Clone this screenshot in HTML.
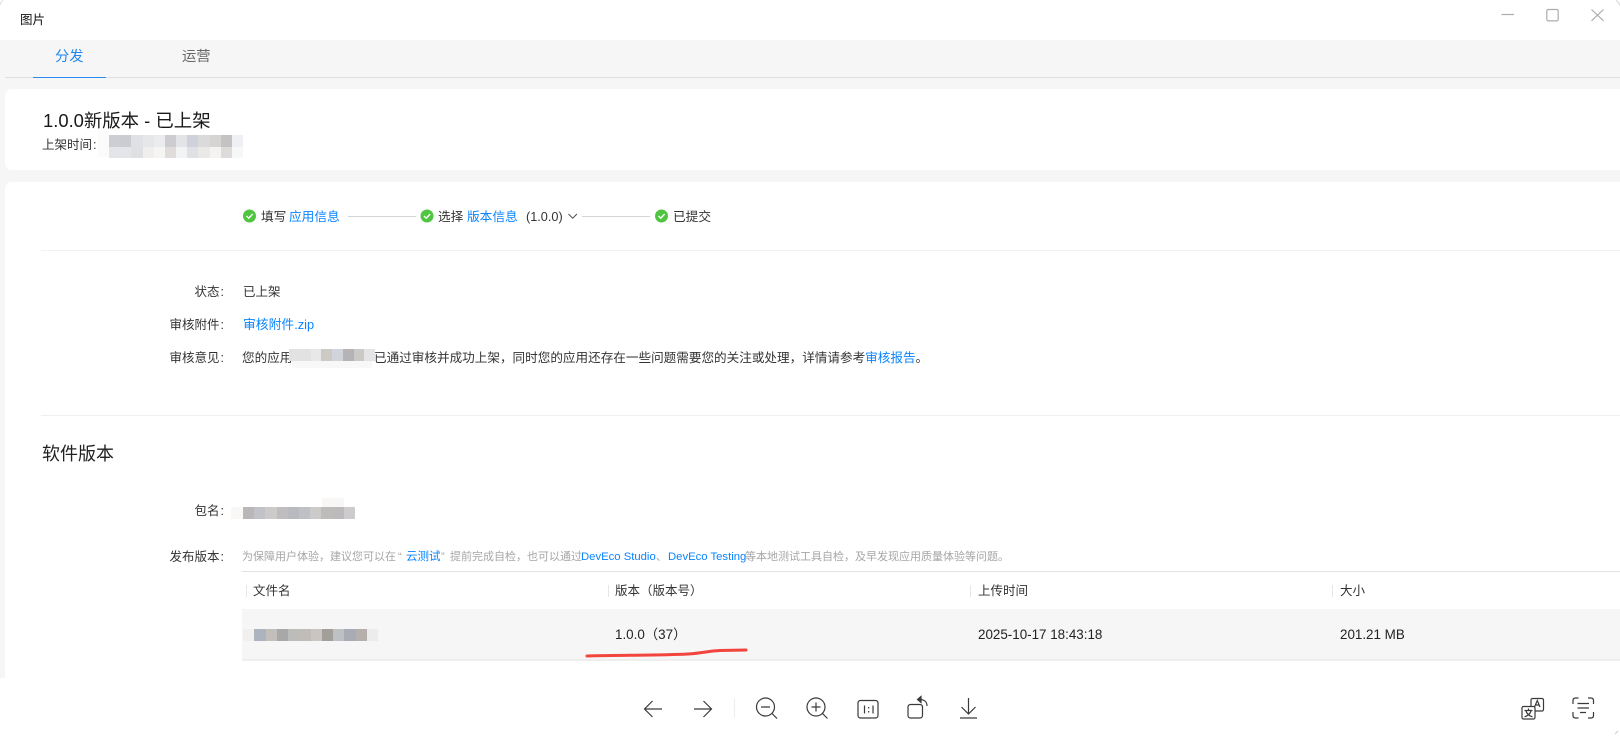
<!DOCTYPE html>
<html lang="zh"><head><meta charset="utf-8"><title>图片</title>
<style>
html,body{margin:0;padding:0;background:#fff}
#p{position:relative;width:1620px;height:736px;overflow:hidden;background:#fff;font-family:"Liberation Sans","Noto Sans CJK SC",sans-serif;font-size:12.5px;color:#333}
#p div{position:absolute;white-space:nowrap}
.t{line-height:18px;height:18px}
.st{top:208px;font-size:12.7px}
.b{color:#0a84ff}
.l{width:70px;left:154px;text-align:right}
.l span{margin-left:1px}
.h{top:548px;font-size:11px;color:#a6a6a6}
.d{font-size:11.3px;color:#0a84ff}
.s{width:1px;height:12px;top:585px;background:#e6e6e6}
.c{top:582px;font-size:12.5px;color:#333}
.v{top:626px;font-size:13.4px;color:#222}
.r{display:flex}
.r i{display:block;flex:1}
svg{position:absolute;overflow:visible}
</style></head><body><div id="p">
<div class="t" style="left:20px;top:11px;color:#111">图片</div>
<svg style="left:0;top:0" width="1620" height="40" fill="none" stroke="#a9acb1" stroke-width="1.2"><path d="M1501.5 14.5H1514"/><rect x="1546.8" y="9.5" width="11.4" height="11.4" rx="1.5"/><path d="M1591.5 9.5L1603.5 20.8M1603.5 9.5L1591.5 20.8"/><path d="M1616 0.5C1618 1.5 1619.5 3.5 1620 6" stroke="#d8d8d8" stroke-width="1"/><path d="M0 5C0.5 3 1.5 1.5 3 0.5" stroke="#d8d8d8" stroke-width="1"/></svg>

<div style="left:0;top:40px;width:1620px;height:638px;background:#f6f6f6"></div>
<div style="left:5px;top:77px;width:1615px;height:1px;background:#dedfe1"></div>
<div style="left:33px;top:77px;width:73px;height:1px;background:#2a8cf0"></div>
<div class="t" style="left:55px;top:48px;font-size:14.3px;color:#1f87f0">分发</div>
<div class="t" style="left:182px;top:48px;font-size:14.3px;color:#666">运营</div>

<div style="left:5px;top:89px;width:1615px;height:81px;background:#fff;border-radius:7px 0 0 7px"></div>
<div class="t" style="left:43px;top:112px;font-size:18.4px;color:#191919">1.0.0新版本 - 已上架</div>
<div class="t" style="left:42px;top:136px">上架时间<span style="margin-left:1px">:</span></div>
<div style="left:98px;top:130px;width:11px;height:27px;background:#fbfbfb"></div>
<div class="r" style="left:109px;top:135px;width:134px;height:12px"><i style="background:#cdced3"></i><i style="background:#cbccd1"></i><i style="background:#e0e1e4"></i><i style="background:#e6e7e9"></i><i style="background:#ebecee"></i><i style="background:#cdcdd1"></i><i style="background:#e3e4e7"></i><i style="background:#cfd2da"></i><i style="background:#dadadb"></i><i style="background:#d6d4d3"></i><i style="background:#c4c2c3"></i><i style="background:#eef0f3"></i></div>
<div class="r" style="left:109px;top:147px;width:134px;height:11px"><i style="background:#e4e5e8"></i><i style="background:#e4e5e8"></i><i style="background:#dfe0e2"></i><i style="background:#f0efee"></i><i style="background:#f5f5f3"></i><i style="background:#dfdcda"></i><i style="background:#f2f3f5"></i><i style="background:#e0e1e5"></i><i style="background:#eae9e8"></i><i style="background:#f4f3f1"></i><i style="background:#dedcdb"></i><i style="background:#f6f7f7"></i></div>

<div style="left:5px;top:182px;width:1615px;height:496px;background:#fff;border-radius:7px 0 0 0"></div>

<svg style="left:0;top:0" width="800" height="240" fill="none">
<circle cx="249.5" cy="216" r="6.5" fill="#4fc540"/><path d="M246.5 216l2.2 2.2 4-4.2" stroke="#fff" stroke-width="1.4"/>
<circle cx="427" cy="216" r="6.5" fill="#4fc540"/><path d="M424 216l2.2 2.2 4-4.2" stroke="#fff" stroke-width="1.4"/>
<circle cx="661.5" cy="216" r="6.5" fill="#4fc540"/><path d="M658.5 216l2.2 2.2 4-4.2" stroke="#fff" stroke-width="1.4"/>
<path d="M348 216.5h68M582 216.5h68" stroke="#d4d4d4"/>
<path d="M568.5 214l4.2 4.2 4.2-4.200" stroke="#444" stroke-width="0.9"/>
</svg>
<div class="t st" style="left:261px">填写</div>
<div class="t st b" style="left:289px">应用信息</div>
<div class="t st" style="left:438px">选择</div>
<div class="t st b" style="left:467px">版本信息</div>
<div class="t st" style="left:526px">(1.0.0)</div>
<div class="t st" style="left:673px">已提交</div>
<div style="left:41px;top:250px;width:1579px;height:1px;background:#f2f2f2"></div>

<div class="t l" style="top:283px">状态<span>:</span></div>
<div class="t" style="left:243px;top:283px">已上架</div>
<div class="t l" style="top:316px">审核附件<span>:</span></div>
<div class="t b" style="left:243px;top:316px;font-size:12.8px">审核附件.zip</div>
<div class="t l" style="top:349px">审核意见<span>:</span></div>
<div class="t" style="left:242px;top:349px;font-size:12.6px">您的应用</div>
<div class="t" style="left:374px;top:349px;font-size:12.6px">已通过审核并成功上架，同时您的应用还存在一些问题需要您的关注或处理，详情请参考<span class="b">审核报告</span>。</div>
<div class="r" style="left:289px;top:349px;width:86px;height:12px"><i style="background:#e3e2e2"></i><i style="background:#e3e2e2"></i><i style="background:#e8e8e9"></i><i style="background:#cdc9c5"></i><i style="background:#d1d4da"></i><i style="background:#b5b3b6"></i><i style="background:#cbc9c6"></i><i style="background:#e4e4e7"></i></div>
<div style="left:292px;top:361px;width:80px;height:7px;background:#f8f8f8"></div>
<div style="left:41px;top:415px;width:1579px;height:1px;background:#efefef"></div>

<div class="t" style="left:42px;top:445px;font-size:18px;color:#222">软件版本</div>
<div class="t l" style="top:502px">包名<span>:</span></div>
<div style="left:231px;top:507px;width:12px;height:12px;background:#f9f8f7"></div>
<div style="left:322px;top:498px;width:22px;height:9px;background:#f8f7f6"></div>
<div class="r" style="left:243px;top:507px;width:112px;height:12px"><i style="background:#b9b7b7"></i><i style="background:#c1c3c9"></i><i style="background:#cdcbca"></i><i style="background:#bfbdc0"></i><i style="background:#b8babf"></i><i style="background:#bec0c6"></i><i style="background:#cdcbca"></i><i style="background:#bebcbb"></i><i style="background:#bcbabd"></i><i style="background:#cdcccc"></i></div>

<div class="t l" style="top:548px">发布版本<span>:</span></div>
<div class="t h" style="left:242px">为保障用户体验，建议您可以在</div>
<div class="t h" style="left:398px">“</div>
<div class="t h" style="left:406px;color:#0a84ff;font-size:11.5px">云测试</div>
<div class="t h" style="left:441px">”</div>
<div class="t h" style="left:450px">提前完成自检，也可以通过</div>
<div class="t h d" style="left:581px">DevEco Studio</div>
<div class="t h" style="left:656px">、</div>
<div class="t h d" style="left:668px">DevEco Testing</div>
<div class="t h" style="left:745px">等本地测试工具自检，及早发现应用质量体验等问题。</div>

<div style="left:242px;top:571px;width:1378px;height:1px;background:#e2e2e2"></div>
<div class="s" style="left:246px"></div>
<div class="s" style="left:608px"></div>
<div class="s" style="left:970px"></div>
<div class="s" style="left:1332px"></div>
<div class="t c" style="left:253px">文件名</div>
<div class="t c" style="left:615px">版本（版本号）</div>
<div class="t c" style="left:978px">上传时间</div>
<div class="t c" style="left:1340px">大小</div>
<div style="left:242px;top:609px;width:1378px;height:50px;background:#f6f6f6"></div>
<div style="left:242px;top:659px;width:1378px;height:2px;background:#eeeeee"></div>
<div class="r" style="left:243px;top:629px;width:135px;height:12px"><i style="background:#f1f0ee"></i><i style="background:#adb4bf"></i><i style="background:#c2bfbb"></i><i style="background:#a8a8a8"></i><i style="background:#bcbcba"></i><i style="background:#c0bdb8"></i><i style="background:#cac5c1"></i><i style="background:#a29f9b"></i><i style="background:#bec0c3"></i><i style="background:#a9acb4"></i><i style="background:#b5b0ab"></i><i style="background:#ececec"></i></div>
<div class="t v" style="left:615px">1.0.0（37）</div>
<div class="t v" style="left:978px">2025-10-17 18:43:18</div>
<div class="t v" style="left:1340px">201.21 MB</div>
<svg style="left:0;top:0" width="800" height="680" fill="none"><path d="M587 656C620 655 660 655.5 688 654C703 653 708 651 720 650.5L746 650" stroke="#f2453d" stroke-width="3" stroke-linecap="round"/></svg>

<div style="left:0;top:678px;width:1620px;height:58px;background:#fff"></div>
<svg style="left:0;top:678px" width="1620" height="58" fill="none" stroke="#3a3a3c" stroke-width="1.2">
<path d="M662 31H645M652.5 23L644.5 31L652.5 39"/>
<path d="M694 31H711M703.5 23L711.5 31L703.5 39"/>
<path d="M734.5 20V40" stroke="#eeeeee"/>
<circle cx="765.5" cy="29" r="9"/><path d="M761 29H770M772 35.5L777 40.5"/>
<circle cx="816" cy="29" r="9"/><path d="M811.5 29H820.5M816 24.5V33.5M822.5 35.5L827.5 40.5"/>
<rect x="858" y="22.5" width="20" height="17.5" rx="2.5"/><path d="M864.5 27.5V35.5M873 27.5V35.5M868.7 29V30.5M868.7 33V34.5"/>
<rect x="908" y="26.5" width="14.5" height="13.5" rx="2.5"/><path d="M920 21.5C924.5 21.5 927 24 927 28"/><path d="M921 18.5L917.5 21.5L921 24.5Z" fill="#3a3a3c"/>
<path d="M968.5 20V36M961.500 29L968.5 36L975.5 29M960 40H977"/>
<rect x="1531" y="20.5" width="12.5" height="12.5" rx="1.5"/><path d="M1534.5 29L1537.3 22.5L1540 29M1535.5 27H1539"/>
<rect x="1522" y="28.5" width="13" height="12.5" rx="1.5" fill="#fff"/>
<path d="M1528.5 30.5V32M1524.5 32.5H1532.5M1526 33C1527 36 1529.5 38 1532.5 38.8M1531 33C1530 36 1527.5 38 1524.5 38.8"/>
<path d="M1573 26V22.5C1573 21 1574 20 1575.5 20H1578.5M1588 20H1591C1592.5 20 1593.5 21 1593.5 22.5V26M1593.5 34V37.5C1593.5 39 1592.5 40 1591 40H1588M1578.5 40H1575.5C1574 40 1573 39 1573 37.5V34"/>
<path d="M1577.5 25.5H1589M1577.5 30H1589M1580 34.5H1586"/>
<path d="M1618 53L1615 56" stroke="#cccccc" stroke-width="1"/>
</svg>
</div></body></html>
